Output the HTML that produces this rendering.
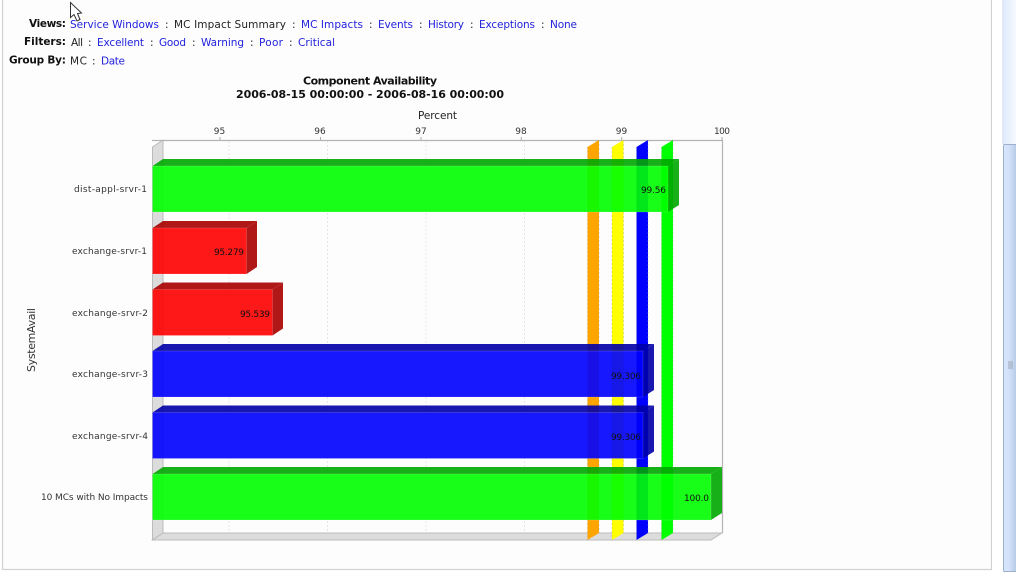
<!DOCTYPE html>
<html><head><meta charset="utf-8"><style>
html,body{margin:0;padding:0;background:#fff;width:1016px;height:573px;overflow:hidden}
svg{display:block;filter:blur(.35px)}
text{font-family:"DejaVu Sans",sans-serif}
.n{font-size:10.5px;fill:#222}
.l{font-size:10.5px;fill:#2222dd}
.b{font-size:10.5px;font-weight:bold;fill:#111}
.t{font-size:11px;font-weight:bold;fill:#111}
.c{font-size:9px;fill:#333}
.v{font-size:9px;fill:#111}
.f{stroke:#fff;stroke-opacity:.15;stroke-width:1}
</style></head><body>
<svg width="1016" height="573" viewBox="0 0 1016 573" xmlns="http://www.w3.org/2000/svg">
<defs>
<linearGradient id="sb" x1="0" x2="1" y1="0" y2="0"><stop offset="0" stop-color="#dce8fb"/><stop offset="1" stop-color="#f6f9fe"/></linearGradient>
<linearGradient id="th" x1="0" x2="1" y1="0" y2="0"><stop offset="0" stop-color="#d8e6fb"/><stop offset=".45" stop-color="#d2e1f8"/><stop offset="1" stop-color="#b4cae6"/></linearGradient>
</defs>
<rect width="1016" height="573" fill="#fff"/>
<!-- frame -->
<path d="M2.5 0V569.5H991.5V0" fill="#fdfdfd" stroke="#d2d2d2" stroke-width="1.2"/>
<rect x="992" y="0" width="10" height="573" fill="#fff"/>
<!-- scrollbar -->
<rect x="1002" y="0" width="14" height="144" fill="url(#sb)"/>
<rect x="1003.5" y="144.5" width="13" height="427" rx="1" fill="url(#th)" stroke="#9db0cf"/>
<path d="M1008 362h5M1008 364h5M1008 366h5M1008 368h5" stroke="#9aa5b5" stroke-width="1"/>
<!-- nav text -->
<g>
<text class="b" x="29" y="27" textLength="37">Views:</text>
<text class="l" x="70" y="28" textLength="89">Service Windows</text>
<text class="n" x="165" y="28">:</text>
<text class="n" x="174" y="28" textLength="112">MC Impact Summary</text>
<text class="n" x="292" y="28">:</text>
<text class="l" x="301" y="28" textLength="62">MC Impacts</text>
<text class="n" x="369" y="28">:</text>
<text class="l" x="378" y="28" textLength="35">Events</text>
<text class="n" x="419" y="28">:</text>
<text class="l" x="428" y="28" textLength="36">History</text>
<text class="n" x="470" y="28">:</text>
<text class="l" x="479" y="28" textLength="56">Exceptions</text>
<text class="n" x="541" y="28">:</text>
<text class="l" x="550" y="28" textLength="27">None</text>

<text class="b" x="24" y="45" textLength="42">Filters:</text>
<text class="n" x="71" y="46" textLength="12">All</text>
<text class="n" x="88" y="46">:</text>
<text class="l" x="97" y="46" textLength="47">Excellent</text>
<text class="n" x="150" y="46">:</text>
<text class="l" x="159" y="46" textLength="27">Good</text>
<text class="n" x="192" y="46">:</text>
<text class="l" x="201" y="46" textLength="43">Warning</text>
<text class="n" x="250" y="46">:</text>
<text class="l" x="259" y="46" textLength="24">Poor</text>
<text class="n" x="289" y="46">:</text>
<text class="l" x="298" y="46" textLength="37">Critical</text>

<text class="b" x="9" y="63.5" textLength="57">Group By:</text>
<text class="n" x="70" y="64.5" textLength="17">MC</text>
<text class="n" x="92" y="64.5">:</text>
<text class="l" x="101" y="64.5" textLength="24">Date</text>

<text class="t" x="303" y="84.5" textLength="134">Component Availability</text>
<text class="t" x="236" y="98" textLength="268">2006-08-15 00:00:00 - 2006-08-16 00:00:00</text>
<text class="n" x="418" y="119" textLength="39">Percent</text>
</g>
<!-- tick labels -->
<text class="c" x="219.5" y="134" text-anchor="middle">95</text>
<text class="c" x="320" y="134" text-anchor="middle">96</text>
<text class="c" x="421" y="134" text-anchor="middle">97</text>
<text class="c" x="521" y="134" text-anchor="middle">98</text>
<text class="c" x="621.5" y="134" text-anchor="middle">99</text>
<text class="c" x="714" y="134" textLength="16">100</text>
<path d="M220 137v3M320.5 137v3M421 137v3M521.3 137v3M621.7 137v3M722 137v3" stroke="#aaa"/>
<!-- plot walls -->
<polygon points="152.5,147 163,140 163,533 152.5,540" fill="#dcdcdc" stroke="#bbb" stroke-width="1"/>
<polygon points="152.5,540 163,533 722,533 711,540" fill="#dcdcdc" stroke="#bbb" stroke-width="1"/>
<path d="M152 140.5H722.5V533" fill="none" stroke="#b4b4b4" stroke-width="1.2"/>
<path d="M229 141V533M327.5 141V533M426 141V533M524.5 141V533M623 141V533" stroke="#e6e6e6" stroke-dasharray="2 2"/>
<!-- markers -->
<polygon points="587.5,147 599,140 599,533 587.5,540" fill="#ffa500"/>
<polygon points="612,147 623.5,140 623.5,533 612,540" fill="#ffff00"/>
<polygon points="636.5,147 648,140 648,533 636.5,540" fill="#0000ff"/>
<polygon points="661.5,147 673,140 673,533 661.5,540" fill="#00ff00"/>
<path d="M587.5 147V540M599 140V533M612 147V540M623.5 140V533M636.5 147V540M648 140V533M661.5 147V540M673 140V533" stroke="#999" stroke-opacity=".35" stroke-dasharray="2 2"/>
<!-- bars -->
<g opacity=".9">
<polygon points="152.5,166 163,159 679,159 668,166" fill="#00a800"/>
<polygon points="668,166 679,159 679,205 668,212" fill="#00a800"/>
<rect class="f" x="152.5" y="166" width="515.5" height="46" fill="#00ff00"/>
</g>
<g opacity=".9">
<polygon points="152.5,228 163,221 257,221 246.5,228" fill="#a80000"/>
<polygon points="246.5,228 257,221 257,267 246.5,274" fill="#a80000"/>
<rect class="f" x="152.5" y="228" width="94" height="46" fill="#ff0000"/>
</g>
<g opacity=".9">
<polygon points="152.5,289.5 163,282.5 283,282.5 272.5,289.5" fill="#a80000"/>
<polygon points="272.5,289.5 283,282.5 283,328.5 272.5,335.5" fill="#a80000"/>
<rect class="f" x="152.5" y="289.5" width="120" height="46" fill="#ff0000"/>
</g>
<g opacity=".9">
<polygon points="152.5,351 163,344 654,344 643,351" fill="#0000a8"/>
<polygon points="643,351 654,344 654,390 643,397" fill="#0000a8"/>
<rect class="f" x="152.5" y="351" width="490.5" height="46" fill="#0000ff"/>
</g>
<g opacity=".9">
<polygon points="152.5,412.5 163,405.5 654,405.5 643,412.5" fill="#0000a8"/>
<polygon points="643,412.5 654,405.5 654,451.5 643,458.5" fill="#0000a8"/>
<rect class="f" x="152.5" y="412.5" width="490.5" height="46" fill="#0000ff"/>
</g>
<g opacity=".9">
<polygon points="152.5,474 163,467 722,467 711,474" fill="#00a800"/>
<polygon points="711,474 722,467 722,513 711,520" fill="#00a800"/>
<rect class="f" x="152.5" y="474" width="558.5" height="46" fill="#00ff00"/>
</g>
<!-- category labels -->
<text class="c" x="74" y="192" textLength="73">dist-appl-srvr-1</text>
<text class="c" x="72" y="254" textLength="75">exchange-srvr-1</text>
<text class="c" x="72" y="316" textLength="76">exchange-srvr-2</text>
<text class="c" x="72" y="377" textLength="76">exchange-srvr-3</text>
<text class="c" x="72" y="439" textLength="76">exchange-srvr-4</text>
<text class="c" x="41" y="500" textLength="107">10 MCs with No Impacts</text>
<text x="0" y="0" transform="translate(35,372) rotate(-90)" textLength="64" style="font-size:11px;fill:#333">SystemAvail</text>
<!-- values -->
<text class="v" x="641" y="193" textLength="25">99.56</text>
<text class="v" x="214" y="255" textLength="30">95.279</text>
<text class="v" x="240" y="317" textLength="30">95.539</text>
<text class="v" x="611" y="379" textLength="30">99.306</text>
<text class="v" x="611" y="440" textLength="30">99.306</text>
<text class="v" x="684" y="501" textLength="25">100.0</text>
<!-- cursor -->
<path d="M70.5 2.5V17.5L74 14.5L77 21L80 19.5L77.5 13.5L81.5 13Z" fill="#fff" stroke="#333" stroke-width="1"/>
</svg>
</body></html>
